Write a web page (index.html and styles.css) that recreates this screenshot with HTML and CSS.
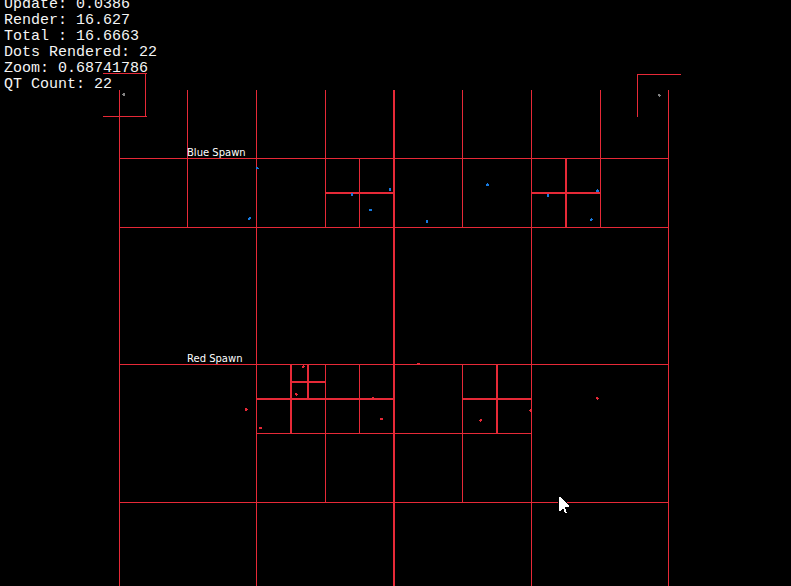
FILE: index.html
```html
<!DOCTYPE html>
<html lang="en">
<head>
<meta charset="utf-8">
<meta name="viewport" content="width=device-width, initial-scale=1">
<title>Quadtree</title>
<link rel="stylesheet" href="styles.css">
</head>
<body>
<main class="world">
  <svg class="scene" aria-label="Quadtree view">
    <!-- Cell edges, one pixel wide -->
    <g class="edge">
      <path d="M119 90h1v496h-1zM187 90h1v138h-1zM256 90h1v496h-1zM325 90h1v138h-1zM325 364h1v139h-1zM359 158h1v70h-1zM359 364h1v70h-1zM462 90h1v138h-1zM462 364h1v139h-1zM531 90h1v496h-1zM600 90h1v138h-1zM668 90h1v496h-1z"/>
      <path d="M119 158h550v1h-550zM119 227h550v1h-550zM119 364h550v1h-550zM119 502h550v1h-550zM256 433h276v1h-276z"/>
      <path d="M393 90h2v496h-2zM565 158h2v70h-2zM290 364h2v70h-2zM307 364h2v35h-2zM496 364h2v70h-2z"/>
      <path d="M325 192h69v2h-69zM531 192h70v2h-70zM256 398h138v2h-138zM462 398h70v2h-70zM290 381h36v2h-36z"/>
      <!-- Query ranges -->
      <path d="M103 73h44v1h-44zM145 73h1v44h-1zM103 116h44v1h-44zM637 74h44v1h-44zM637 74h1v43h-1z"/>
    </g>
    <path class="dot-blue" d="M256 167h2v1h1v1h-3zM249 217h2v2h-1v1h-2v-2h1zM351 193h2v3h-2zM369 209h3v2h-3zM389 188h2v3h-2zM426 220h2v3h-2zM487 183h1v1h1v2h-3v-2h1zM547 194h2v3h-2zM597 189h1v1h1v2h-3v-2h1zM591 218h1v1h1v1h-1v1h-2v-2h1z"/>
    <path class="dot-red" d="M245 408h2v1h1v1h-1v1h-2zM259 427h3v2h-3zM303 365h1v1h1v1h-1v1h-2v-2h1zM295 393h2v1h1v1h-1v1h-1v-1h-1zM372 397h2v1h-2zM380 418h3v2h-3zM417 363h3v1h-3zM480 419h2v2h-1v1h-1v-1h-1v-1h1zM530 409h2v3h-2v-1h-1v-1h1zM596 397h2v1h1v1h-1v1h-1v-1h-1z"/>
    <path class="dot-gray" d="M123 93h2v3h-2v-1h-1v-1h1zM658 94h2v1h1v1h-1v1h-1v-1h-1z"/>
    <text class="spawn" x="187" y="156">Blue Spawn</text>
    <text class="spawn" x="187" y="362">Red Spawn</text>
    <path class="pointer" d="M559 497V511L560 511L563 508L565 513H567L565 507H569V506L560 497Z"/>
  </svg>
  <section class="stats" aria-label="Statistics">
    <div>Update: 0.0386</div>
    <div>Render: 16.627</div>
    <div>Total : 16.6663</div>
    <div>Dots Rendered: 22</div>
    <div>Zoom: 0.68741786</div>
    <div>QT Count: 22</div>
  </section>
</main>
</body>
</html>
```
FILE: styles.css
```css
body {
  margin: 0;
  background: #000;
  overflow: hidden;
}

.world {
  display: grid;
  min-height: 100vh;
}

.scene,
.stats {
  grid-area: 1 / 1;
}

.scene {
  display: block;
  width: 100%;
  height: 100%;
  shape-rendering: crispEdges;
}

.edge,
.dot-red {
  fill: #e62937;
}

.dot-blue {
  fill: #1679df;
}

.dot-gray {
  fill: #828282;
}

.spawn {
  fill: #fff;
  font: 10px "DejaVu Sans", sans-serif;
}

.pointer {
  fill: #fff;
  stroke: #000;
  stroke-width: 2px;
  paint-order: stroke;
}

.stats {
  align-self: start;
  margin: -3px 0 0 4px;
  color: #f5f5f5;
  font: 15px/16px "Liberation Mono", monospace;
}
```
